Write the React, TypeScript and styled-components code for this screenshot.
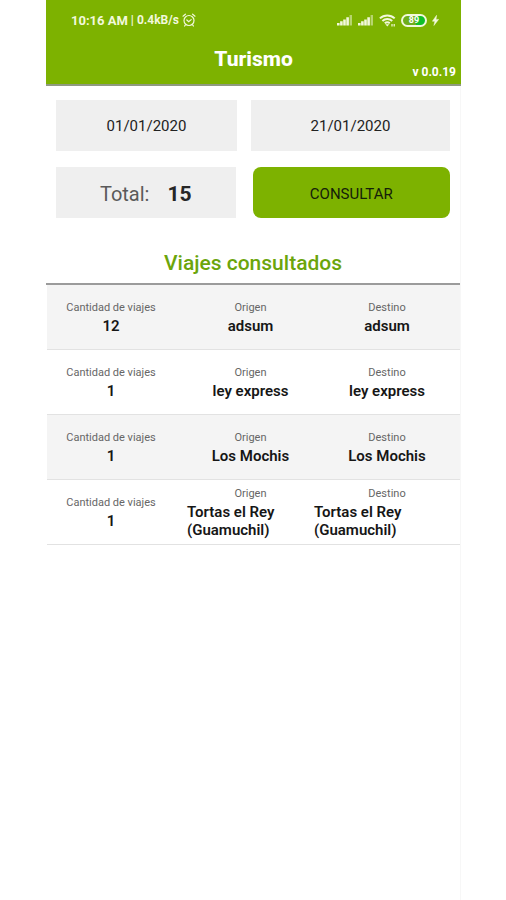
import React from "react";
import styled, { createGlobalStyle } from "styled-components";

const GlobalStyle = createGlobalStyle`
  *, *::before, *::after { box-sizing: border-box; }
  body {
    margin: 0;
    background: #ffffff;
    color: #161616;
    font-family: Roboto, "Liberation Sans", sans-serif;
  }
`;

const green = "#7db200";

const Page = styled.div`
  padding: 0 45px 0 46px;
`;

const Screen = styled.div`
  min-height: 100vh;
  border-right: 1px solid #f7f7f7;
`;

const Header = styled.header`
  margin-right: -1px;
  background: ${green};
  color: #ffffff;
  border-bottom: 2px solid #8f9a80;
`;

const StatusBar = styled.div`
  display: flex;
  justify-content: space-between;
  align-items: center;
  height: 40px;
  padding: 0 22px 0 25px;
  font-size: 12px;
  font-weight: 700;
  color: #f2f8dc;
`;

const StatusGroup = styled.div<{ $gap: number }>`
  display: flex;
  align-items: center;
  gap: ${(p) => p.$gap}px;
`;

const Clock = styled.span`
  font-size: 13px;
`;

const TitleBar = styled.div`
  display: grid;
  grid-template-columns: 1fr auto 1fr;
  height: 44px;
  padding: 0 5px 4px;
`;

const AppTitle = styled.h1`
  grid-column: 2;
  margin: 7px 0 0;
  font-size: 21px;
  line-height: 24px;
  font-weight: 800;
`;

const Version = styled.span`
  grid-column: 3;
  justify-self: end;
  align-self: end;
  font-size: 12px;
  line-height: 16px;
  font-weight: 700;
`;

const Form = styled.form`
  display: flex;
  flex-direction: column;
  gap: 16px;
  padding: 14px 10px 0;
`;

const FieldRow = styled.div<{ $gap: number }>`
  display: grid;
  grid-template-columns: 10fr 11fr;
  gap: ${(p) => p.$gap}px;
  height: 51px;
`;

const DateInput = styled.input`
  min-width: 0;
  width: 100%;
  padding: 0;
  border: 0;
  border-radius: 0;
  background: #efefef;
  color: #222222;
  font: 400 15px/20px Roboto, sans-serif;
  text-align: center;
`;

const Total = styled.output`
  display: flex;
  align-items: center;
  justify-content: center;
  gap: 18px;
  padding-top: 2px;
  background: #efefef;
  font-size: 20px;
  color: #5a5a5a;

  strong {
    font-size: 21px;
    font-weight: 700;
    color: #262626;
  }
`;

const SubmitButton = styled.button`
  border: 0;
  border-radius: 8px;
  padding: 2px 0 0;
  background: ${green};
  color: #14200a;
  font: 400 15px/20px Roboto, sans-serif;
  cursor: pointer;
`;

const SectionTitle = styled.h2`
  margin: 0;
  padding: 32px 0 7px;
  border-bottom: 2px solid #9b9b9b;
  color: #6ba50b;
  font-size: 21px;
  line-height: 26px;
  font-weight: 500;
  text-align: center;
`;

const TripList = styled.ul`
  margin: 0;
  padding: 0 0 0 1px;
  list-style: none;
`;

const TripRow = styled.li`
  display: grid;
  grid-template-columns: 140fr 127fr 146fr;
  align-items: center;
  min-height: 65px;
  border-bottom: 1px solid #e2e2e2;

  &:nth-child(odd) {
    background: #f4f4f4;
  }
`;

const Cell = styled.dl<{ $inset?: number }>`
  display: flex;
  flex-direction: column;
  align-items: center;
  margin: 0;
  padding-right: ${(p) => p.$inset ?? 0}px;
`;

const Label = styled.dt`
  font-size: 11px;
  line-height: 18px;
  color: #666666;
`;

const Value = styled.dd`
  margin: 0;
  font-size: 15px;
  line-height: 18px;
  font-weight: 600;
`;

const AlarmIcon = () => (
  <svg width="14" height="14" viewBox="0 0 14 14" fill="none" stroke="currentColor" strokeWidth="1.2" strokeLinecap="round" aria-hidden="true">
    <circle cx="7" cy="7.5" r="5" />
    <path d="M1 3.2 3.4 1.2M13 3.2 10.6 1.2M4.8 7 6.7 8.8 9.2 6.6M3.4 11.8 2.6 13M10.6 11.8l.8 1.2" />
  </svg>
);

const SignalIcon = () => (
  <svg width="16" height="12" viewBox="0 0 16 12" fill="currentColor" aria-hidden="true">
    <path d="M0 9h2.6v2.5H0zM3.1 7.3h2.6v4.2H3.1zM6.2 5.4h2.6v6.1H6.2zM9.3 3.2h2.6v8.3H9.3z" />
    <path d="M12.6 1h2.4v10.5h-2.4z" opacity="0.5" />
  </svg>
);

const WifiIcon = () => (
  <svg width="17" height="13" viewBox="0 0 17 13" fill="none" stroke="currentColor" strokeWidth="2" aria-hidden="true">
    <path d="M.9 4.4c4.2-4 10.6-4 14.8 0M3.4 7c2.8-2.6 7-2.6 9.8 0M5.8 9.3c1.5-1.3 3.5-1.3 5 0" />
    <path d="M6.3 10.2h4L8.3 12.5z" fill="currentColor" stroke="none" />
    <path d="M13 10v2.4M15.2 10v2.4" strokeWidth="1.2" />
  </svg>
);

const Battery = styled.span`
  display: flex;
  align-items: center;
  justify-content: center;
  width: 26px;
  height: 13px;
  border: 2px solid #f2f8dc;
  border-radius: 7px;
  background: linear-gradient(90deg, #6fae1c 60%, #10bf2a 60%);
  color: #ffffff;
  font-size: 9px;
  line-height: 9px;
  font-weight: 700;
`;

const BoltIcon = () => (
  <svg width="7" height="11" viewBox="0 0 7 11" fill="currentColor" stroke="currentColor" strokeWidth="0.5" aria-hidden="true">
    <path d="M4.6.3.4 6.2h2.5L1.9 10.5 6.6 4.4H4z" />
  </svg>
);

const trips = [
  { count: 12, origin: "adsum", destination: "adsum" },
  { count: 1, origin: "ley express", destination: "ley express" },
  { count: 1, origin: "Los Mochis", destination: "Los Mochis" },
  { count: 1, origin: "Tortas el Rey (Guamuchil)", destination: "Tortas el Rey (Guamuchil)" },
];

export default function App() {
  return (
    <Page>
      <GlobalStyle />
      <Screen>
        <Header>
          <StatusBar>
            <StatusGroup $gap={3}>
              <Clock>10:16 AM</Clock>
              <span>|</span>
              <span>0.4kB/s</span>
              <AlarmIcon />
            </StatusGroup>
            <StatusGroup $gap={5}>
              <SignalIcon />
              <SignalIcon />
              <WifiIcon />
              <Battery>89</Battery>
              <BoltIcon />
            </StatusGroup>
          </StatusBar>
          <TitleBar>
            <AppTitle>Turismo</AppTitle>
            <Version>v 0.0.19</Version>
          </TitleBar>
        </Header>
        <main>
          <Form onSubmit={(e) => e.preventDefault()}>
            <FieldRow $gap={14}>
              <DateInput type="text" aria-label="Fecha inicial" defaultValue="01/01/2020" />
              <DateInput type="text" aria-label="Fecha final" defaultValue="21/01/2020" />
            </FieldRow>
            <FieldRow $gap={17}>
              <Total>
                <span>Total:</span>
                <strong>15</strong>
              </Total>
              <SubmitButton type="submit">CONSULTAR</SubmitButton>
            </FieldRow>
          </Form>
          <SectionTitle>Viajes consultados</SectionTitle>
          <TripList>
            {trips.map((trip, i) => (
              <TripRow key={i}>
                <Cell $inset={12}>
                  <Label>Cantidad de viajes</Label>
                  <Value>{trip.count}</Value>
                </Cell>
                <Cell>
                  <Label>Origen</Label>
                  <Value>{trip.origin}</Value>
                </Cell>
                <Cell>
                  <Label>Destino</Label>
                  <Value>{trip.destination}</Value>
                </Cell>
              </TripRow>
            ))}
          </TripList>
        </main>
      </Screen>
    </Page>
  );
}
